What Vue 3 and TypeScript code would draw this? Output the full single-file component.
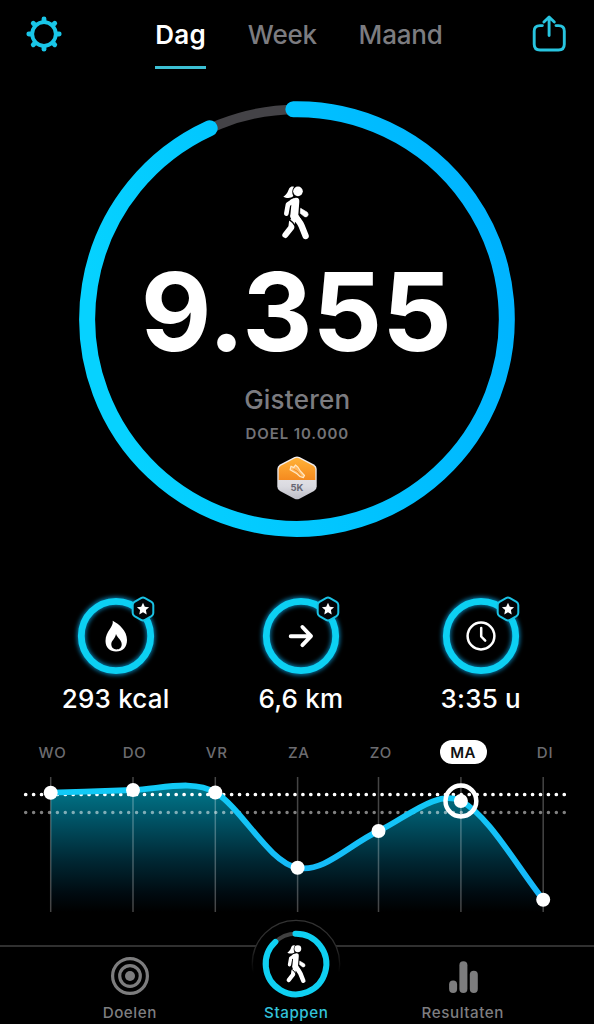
<script setup lang="ts">
interface Day { label: string; x: number; y: number; active?: boolean }
interface Stat { kind: 'flame' | 'arrow' | 'clock'; value: string }

const ranges: string[] = ['Dag', 'Week', 'Maand']
const teeth: number[] = [0, 45, 90, 135, 180, 225, 270, 315]

const stats: Stat[] = [
  { kind: 'flame', value: '293 kcal' },
  { kind: 'arrow', value: '6,6 km' },
  { kind: 'clock', value: '3:35 u' },
]

const days: Day[] = [
  { label: 'WO', x: 50.7, y: 22.7 },
  { label: 'DO', x: 133, y: 20 },
  { label: 'VR', x: 215.3, y: 22.5 },
  { label: 'ZA', x: 297.6, y: 97.8 },
  { label: 'ZO', x: 378.5, y: 61 },
  { label: 'MA', x: 460.9, y: 31, active: true },
  { label: 'DI', x: 543.2, y: 129.7 },
]

const curve =
  'M50.7 22.7 C78 21.6 106 21 133 20 C160 19 193 9 215.3 22.5 C242 38 268 92 297.6 97.8 ' +
  'C324 103 350 74 378.5 61 C406 48 437 19 460.9 31 C488 45 514 92 543.2 129.7'
const area = `${curve} L543.2 142 L50.7 142 Z`

function arc(cx: number, cy: number, r: number, from: number, to: number): string {
  const at = (deg: number): string => {
    const a = (deg * Math.PI) / 180
    return `${(cx + r * Math.sin(a)).toFixed(2)} ${(cy - r * Math.cos(a)).toFixed(2)}`
  }
  return `M${at(from)} A${r} ${r} 0 ${to - from > 180 ? 1 : 0} 1 ${at(to)}`
}

const mainArc = arc(219, 219, 209.8, -1, 335.4)
const smallArc = arc(34, 34, 30.3, -1, 317)
</script>

<template>
  <div class="screen">
    <svg class="defs" width="0" height="0" aria-hidden="true">
      <symbol id="walker" viewBox="305 285 88 168">
        <circle cx="356" cy="304" r="14.5" fill="#fff" />
        <path d="M344 290C332 287 329 296 326 304C323 312 317 317 312 320C321 325 334 326 342 318C337 309 338 298 344 290Z" fill="#fff" />
        <path d="M321 371L326 343L343 332" fill="none" stroke="#fff" stroke-width="14" stroke-linecap="round" stroke-linejoin="round" />
        <path d="M332 330L349 323Q361 322 360 335L357 374L365 388L346 396Q332 390 333 376L336 345Z" fill="#fff" />
        <path d="M338 396L336 412L318 435" fill="none" stroke="#fff" stroke-width="18" stroke-linecap="round" stroke-linejoin="round" />
        <path d="M326 386Q342 396 351 413L362 440" fill="none" stroke="#000" stroke-width="4" />
        <path d="M343 378Q361 393 367 408L379 438" fill="none" stroke="#fff" stroke-width="19" stroke-linecap="round" stroke-linejoin="round" />
        <path d="M364 355L384 367Q389 373 385 378Q381 382 376 380L363 370Z" fill="#fff" stroke="#fff" stroke-width="2" stroke-linejoin="round" />
      </symbol>
    </svg>

    <header class="top">
      <svg class="gear" width="38" height="38" viewBox="-19 -19 38 38">
        <g fill="none" stroke="#19c6e8" stroke-width="4.8" stroke-linecap="round">
          <path v-for="t in teeth" :key="t" :transform="`rotate(${t})`" d="M0 -12.5V-15.2" />
        </g>
        <circle r="11.8" fill="none" stroke="#19c6e8" stroke-width="3.8" />
      </svg>
      <nav class="ranges">
        <span v-for="(r, i) in ranges" :key="r" class="range" :class="{ selected: i === 0 }">{{ r }}</span>
      </nav>
      <svg class="share" width="36" height="40" viewBox="0 0 36 40">
        <g fill="none" stroke="#28c5e0" stroke-width="2.9" stroke-linecap="round" stroke-linejoin="round">
          <path d="M11.4 12.6H9Q3.2 12.6 3.2 18V31.3Q3.2 37 9 37H27.5Q33.3 37 33.3 31.3V18Q33.3 12.6 27.5 12.6H25" />
          <path d="M18.1 22.5V4.4M12.9 9L18.1 4L23.3 9" />
        </g>
      </svg>
    </header>

    <section class="hero">
      <svg class="ring" width="438" height="438" viewBox="0 0 438 438">
        <defs>
          <linearGradient id="ringFill" x1="1" y1=".15" x2="0" y2=".4">
            <stop offset="0" stop-color="#00b2ff" />
            <stop offset=".5" stop-color="#00c3ff" />
            <stop offset="1" stop-color="#06d2ff" />
          </linearGradient>
        </defs>
        <circle cx="219" cy="219" r="209.5" fill="none" stroke="#444347" stroke-width="9.5" />
        <path :d="mainArc" fill="none" stroke="url(#ringFill)" stroke-width="16" stroke-linecap="round" />
      </svg>
      <div class="summary">
        <svg class="walker" width="29.3" height="56"><use href="#walker" /></svg>
        <div class="count">9.355</div>
        <div class="when">Gisteren</div>
        <div class="goal">DOEL 10.000</div>
        <svg class="medal" width="42" height="46" viewBox="0 0 42 46">
          <defs>
            <linearGradient id="orange" x1="0" y1="0" x2="0" y2="1">
              <stop offset="0" stop-color="#ffb238" />
              <stop offset="1" stop-color="#f58a1f" />
            </linearGradient>
            <linearGradient id="silver" x1="0" y1="0" x2="0" y2="1">
              <stop offset="0" stop-color="#f6f2f2" />
              <stop offset=".7" stop-color="#dadae0" />
              <stop offset="1" stop-color="#bdbdc6" />
            </linearGradient>
          </defs>
          <path d="M18.5 2Q21 .8 23.5 2L38 9.5Q40.7 11 40.7 14V31.5Q40.7 34.5 38 36L23.5 43.7Q21 45 18.5 43.7L4 36Q1.3 34.5 1.3 31.5V14Q1.3 11 4 9.5Z" fill="url(#silver)" />
          <path d="M19 3.2Q21 2.3 23 3.2L37.2 10.7Q39.3 12 39.3 14.3V25H2.7V14.3Q2.7 12 4.8 10.7Z" fill="url(#orange)" />
          <path d="M15 11.2L17.8 12.6L19.4 10L22 12.2L24.3 16L28.5 20.5L27.3 22.6Q23.5 22 21 18.8L14.1 14.8Z" fill="#ffb861" stroke="#ffe7c4" stroke-width="1.2" stroke-linejoin="round" />
          <path d="M17.5 14.3L21 16L25 20.7" fill="none" stroke="#ec851b" stroke-width=".9" />
          <text x="21" y="36.2" text-anchor="middle" class="medal-text">5K</text>
        </svg>
      </div>
    </section>

    <section class="stats">
      <div v-for="s in stats" :key="s.kind" class="stat">
        <svg class="stat-ring" width="90" height="90" viewBox="-45 -45 90 90">
          <circle class="glow" r="34.7" fill="none" stroke="#0877a5" stroke-width="9" />
          <circle r="34.7" fill="none" stroke="#0cd0f3" stroke-width="6.8" />
          <path v-if="s.kind === 'flame'" fill="#fff" fill-rule="evenodd" d="M-3.3 -15.2C-2 -9 -10.5 -5 -10.5 5C-10.5 11.5 -6 15.5 0 15.5C7 15.5 11 11 11 4C11 -5 3 -12 -3.3 -15.2ZM0 -2C1.5 2 5.7 4 5.7 8.2C5.7 11.8 3.3 13.4 .5 13.4C-2.6 13.4 -4.7 11.3 -4.7 8.2C-4.7 4.8 -1 3 0 -2Z" />
          <path v-else-if="s.kind === 'arrow'" d="M-10.3 .2H9.2M1.4 -9L10 .2L1.4 9.2" fill="none" stroke="#fff" stroke-width="3.9" stroke-linecap="round" stroke-linejoin="round" />
          <g v-else fill="none" stroke="#fff" stroke-width="2.5" stroke-linecap="round" stroke-linejoin="round">
            <circle r="13.4" />
            <path d="M.2 -8V.5L4.2 4.7" />
          </g>
          <g transform="translate(27 -27)">
            <path d="M-2 -10.9Q0 -12 2 -10.9L8.5 -7.2Q10.3 -6 10.3 -4V4Q10.3 6 8.5 7.2L2 10.9Q0 12 -2 10.9L-8.5 7.2Q-10.3 6 -10.3 4V-4Q-10.3 -6 -8.5 -7.2Z" fill="#020407" stroke="#1ac2e4" stroke-width="2" />
            <path d="M0 -6.2L1.8 -2.3L6.1 -1.8L2.9 1.1L3.7 5.4L0 3.3L-3.7 5.4L-2.9 1.1L-6.1 -1.8L-1.8 -2.3Z" fill="#fff" />
          </g>
        </svg>
        <div class="stat-value">{{ s.value }}</div>
      </div>
    </section>

    <section class="week">
      <div class="day-row">
        <div v-for="d in days" :key="d.label" class="day">
          <span class="day-label" :class="{ active: d.active }">{{ d.label }}</span>
        </div>
      </div>
      <svg class="chart" width="594" height="146" viewBox="0 0 594 146">
        <defs>
          <linearGradient id="areaFill" gradientUnits="userSpaceOnUse" x1="0" y1="14" x2="0" y2="142">
            <stop offset="0" stop-color="#007a8e" />
            <stop offset=".3" stop-color="#005062" />
            <stop offset=".6" stop-color="#002733" />
            <stop offset=".85" stop-color="#000b11" />
            <stop offset="1" stop-color="#000" />
          </linearGradient>
          <linearGradient id="lineFill" gradientUnits="userSpaceOnUse" x1="0" y1="14" x2="0" y2="130">
            <stop offset="0" stop-color="#12cbf6" />
            <stop offset="1" stop-color="#16b5fa" />
          </linearGradient>
        </defs>
        <path :d="area" fill="url(#areaFill)" />
        <line v-for="d in days" :key="d.label" :x1="d.x" :x2="d.x" y1="7" y2="142" stroke="#fff" stroke-opacity=".27" stroke-width="1.5" />
        <path d="M25.7 42.5H565" stroke="#fff" stroke-opacity=".5" stroke-width="3.5" stroke-linecap="round" stroke-dasharray="0 7.92" />
        <path d="M25.7 24.5H565" stroke="#fff" stroke-width="3.7" stroke-linecap="round" stroke-dasharray="0 7.92" />
        <path :d="curve" fill="none" stroke="url(#lineFill)" stroke-width="5.8" />
        <g v-for="d in days" :key="d.label">
          <circle v-if="d.active" :cx="d.x" :cy="d.y" r="15.4" fill="none" stroke="#fff" stroke-width="4.5" />
          <circle :cx="d.x" :cy="d.y" r="7" fill="#fff" />
        </g>
      </svg>
    </section>

    <footer class="tabs">
      <div class="tab">
        <svg class="tab-icon target" width="40" height="40" viewBox="-20 -20 40 40">
          <g fill="none" stroke="#7d7d7e" stroke-width="3.2">
            <circle r="17.4" />
            <circle r="10.3" />
          </g>
          <circle r="5" fill="#7d7d7e" />
        </svg>
        <span class="tab-label">Doelen</span>
      </div>
      <div class="tab current">
        <svg class="bump" width="92" height="92" viewBox="-46 -46 92 92">
          <defs>
            <linearGradient id="bumpLine" x1="0" y1="0" x2="0" y2="1">
              <stop offset="0" stop-color="#333" />
              <stop offset=".3" stop-color="#2c2c2c" />
              <stop offset=".6" stop-color="#000" />
            </linearGradient>
          </defs>
          <circle r="43.7" fill="#000" stroke="url(#bumpLine)" stroke-width="1.3" />
          <g transform="translate(-34 -34)">
            <circle cx="34" cy="34" r="30.3" fill="none" stroke="#404040" stroke-width="4" />
            <path :d="smallArc" fill="none" stroke="#0fd0f2" stroke-width="6" stroke-linecap="round" />
            <use href="#walker" x="23.4" y="14.3" width="21.5" height="40" />
          </g>
        </svg>
        <span class="tab-label">Stappen</span>
      </div>
      <div class="tab">
        <svg class="tab-icon" width="40" height="40" viewBox="0 0 40 40">
          <g fill="#7d7d7e">
            <rect x="6.1" y="23.5" width="8" height="12.5" rx="4" />
            <rect x="16.4" y="4.2" width="8" height="31.8" rx="4" />
            <rect x="26.8" y="13.8" width="8" height="22.2" rx="4" />
          </g>
        </svg>
        <span class="tab-label">Resultaten</span>
      </div>
    </footer>
  </div>
</template>

<style>
body { background: #000; }
</style>

<style scoped>
.screen {
  width: 594px;
  height: 1024px;
  overflow: hidden;
  display: flex;
  flex-direction: column;
  background: #000;
  color: #fff;
  font-family: Inter, "Liberation Sans", sans-serif;
}
.screen svg { display: block; flex: none; }
.screen .defs { position: absolute; }
.top {
  flex: none;
  height: 100px;
  display: flex;
  align-items: flex-start;
}
.gear { margin: 15px 0 0 25.3px; }
.ranges {
  width: 461.5px;
  padding-left: 92px;
  box-sizing: border-box;
  display: flex;
  gap: 41.7px;
}
.range {
  height: 69px;
  box-sizing: border-box;
  padding-top: 19px;
  line-height: 32px;
  font-size: 26px;
  font-weight: 550;
  letter-spacing: -.2px;
  color: #7c7c80;
  border-bottom: 3px solid transparent;
}
.range.selected {
  font-weight: 600;
  letter-spacing: .3px;
  color: #fff;
  border-bottom-color: #3cc0d4;
}
.share { margin: 13px 0 0 6.5px; }
.hero {
  flex: none;
  height: 491px;
  display: grid;
  grid-template-columns: 438px;
  margin-left: 78.3px;
}
.ring, .summary { grid-area: 1 / 1; }
.summary {
  display: flex;
  flex-direction: column;
  align-items: center;
  padding-top: 85px;
  height: 353px;
}
.walker { margin-right: 3px; }
.count {
  margin: 20px 2px 0 0;
  height: 100px;
  line-height: 100px;
  font-size: 109px;
  font-weight: 700;
  white-space: nowrap;
}
.when {
  margin-top: 23px;
  line-height: 32px;
  font-size: 26px;
  font-weight: 550;
  letter-spacing: .25px;
  color: #7c7c80;
}
.goal {
  margin-top: 8px;
  line-height: 20px;
  font-size: 15px;
  font-weight: 600;
  letter-spacing: .9px;
  color: #727276;
}
.medal { margin-top: 11px; }
.medal-text {
  font-size: 9.5px;
  font-weight: 700;
  fill: #686873;
}
.stats {
  flex: none;
  height: 149px;
  display: grid;
  grid-template-columns: 185.3px 179.9px 120px;
  padding-left: 55.6px;
}
.stat {
  width: 120px;
  display: flex;
  flex-direction: column;
  align-items: center;
}
.glow { filter: blur(2px); }
.stat-value {
  margin-top: 2px;
  line-height: 32px;
  font-size: 26px;
  font-weight: 550;
  letter-spacing: .2px;
  white-space: nowrap;
}
.week { flex: none; height: 205px; }
.day-row {
  height: 30px;
  display: grid;
  grid-template-columns: repeat(7, 82.1px);
  padding-left: 11.5px;
}
.day { display: flex; justify-content: center; }
.day-label {
  height: 24px;
  line-height: 25px;
  font-size: 15px;
  font-weight: 550;
  letter-spacing: .8px;
  color: #6c6c70;
}
.day-label.active {
  width: 47px;
  text-align: center;
  border-radius: 12px;
  background: #fff;
  color: #111;
  font-weight: 600;
  letter-spacing: .3px;
}
.tabs {
  flex: none;
  height: 79px;
  box-sizing: border-box;
  border-top: 2px solid #303030;
  display: grid;
  grid-template-columns: repeat(3, 166.5px);
  padding-left: 46.5px;
}
.tab {
  display: flex;
  flex-direction: column;
  align-items: center;
  color: #7e7e80;
}
.tab-icon { margin-top: 9.5px; }
.target { margin-top: 9px; margin-bottom: .5px; }
.bump { margin-top: -29.5px; }
.tab-label {
  margin-top: 6px;
  line-height: 20px;
  font-size: 15.2px;
  font-weight: 500;
  letter-spacing: .55px;
}
.bump + .tab-label { margin-top: -7px; position: relative; }
.current { color: #33c3da; }
</style>
